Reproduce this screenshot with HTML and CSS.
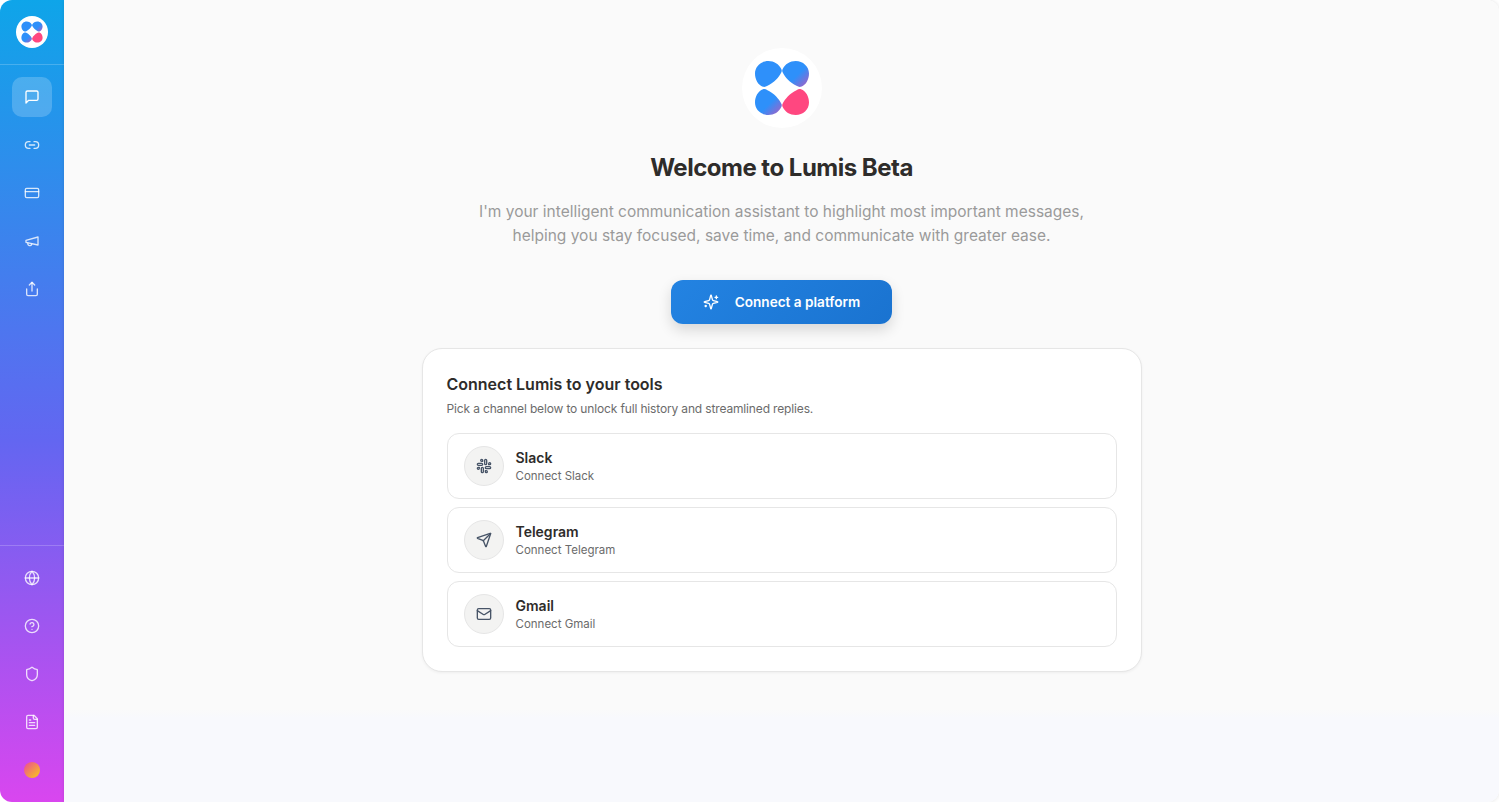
FILE: index.html
```html
<!DOCTYPE html>
<html lang="en">
<head>
    <meta charset="UTF-8">
    <meta name="viewport" content="width=device-width, initial-scale=1.0">
    <title>Lumis Beta</title>
    <link rel="stylesheet" href="styles.css">
</head>
<body>

<svg width="0" height="0" class="defs">
    <defs>
        <linearGradient id="petalA" x1="0" y1="0" x2="1" y2="1">
            <stop offset="0.55" stop-color="#2e90fa"/>
            <stop offset="1" stop-color="#b05cc0"/>
        </linearGradient>
        <symbol id="logo" viewBox="0 0 56 56">
            <path fill="#2e90fa" d="M14.300 1C7 1 1 6.500 1 13.500C1 19.500 4 25 9 26.800C10.500 27.200 12 26.800 13.500 25.800C20 22.500 25 17.500 27.500 12C28 11 27.800 10 27.300 9C25 4 20 1 14.300 1Z"/>
            <path fill="url(#petalA)" d="M41.700 1C49 1 55 6.500 55 13.500C55 19.500 52 25 47 26.800C45.500 27.200 44 26.800 42.500 25.800C36 22.500 31 17.500 28.500 12C28 11 28.200 10 28.700 9C31 4 36 1 41.700 1Z"/>
            <path fill="url(#petalA)" d="M14.300 55C7 55 1 49.500 1 42.500C1 36.500 4 31 9 29.200C10.500 28.800 12 29.200 13.500 30.200C20 33.500 25 38.500 27.500 44C28 45 27.800 46 27.300 47C25 52 20 55 14.300 55Z"/>
            <path fill="#ff4780" d="M41.700 55C49 55 55 49.500 55 42.500C55 36.500 52 31 47 29.200C45.500 28.800 44 29.200 42.500 30.200C36 33.500 31 38.500 28.500 44C28 45 28.200 46 28.700 47C31 52 36 55 41.700 55Z"/>
        </symbol>
    </defs>
</svg>

<div class="app">
    <!-- Sidebar -->
    <aside class="sidebar">
        <div class="side-top">
            <div class="side-logo"><svg class="logo-small"><use href="#logo"/></svg></div>
        </div>
        <nav class="side-nav">
            <a class="side-btn active"><svg class="ico" viewBox="0 0 24 24"><path d="M21 15a2 2 0 0 1-2 2H7l-4 4V5a2 2 0 0 1 2-2h14a2 2 0 0 1 2 2z"/></svg></a>
            <a class="side-btn"><svg class="ico" viewBox="0 0 24 24"><path d="M9 17H7A5 5 0 0 1 7 7h2"/><path d="M15 7h2a5 5 0 1 1 0 10h-2"/><line x1="8" y1="12" x2="16" y2="12"/></svg></a>
            <a class="side-btn"><svg class="ico" viewBox="0 0 24 24"><rect x="2" y="5" width="20" height="14" rx="2"/><line x1="2" y1="10" x2="22" y2="10"/></svg></a>
            <a class="side-btn"><svg class="ico" viewBox="0 0 24 24"><path d="M3 11l18-5v12L3 14z"/><path d="M11.600 16.800a3 3 0 1 1-5.800-1.600"/></svg></a>
            <a class="side-btn"><svg class="ico" viewBox="0 0 24 24"><path d="M4 12v8a2 2 0 0 0 2 2h12a2 2 0 0 0 2-2v-8"/><polyline points="16 6 12 2 8 6"/><line x1="12" y1="2" x2="12" y2="15"/></svg></a>
        </nav>
        <div class="side-bottom">
            <a class="side-btn"><svg class="ico" viewBox="0 0 24 24"><circle cx="12" cy="12" r="10"/><path d="M12 2a14.500 14.500 0 0 0 0 20 14.500 14.500 0 0 0 0-20"/><path d="M2 12h20"/></svg></a>
            <a class="side-btn"><svg class="ico" viewBox="0 0 24 24"><circle cx="12" cy="12" r="10"/><path d="M9.090 9a3 3 0 0 1 5.830 1c0 2-3 3-3 3"/><line x1="12" y1="17" x2="12.010" y2="17"/></svg></a>
            <a class="side-btn"><svg class="ico" viewBox="0 0 24 24"><path d="M20 13c0 5-3.500 7.500-7.660 8.950a1 1 0 0 1-.67-.01C7.500 20.500 4 18 4 13V6a1 1 0 0 1 1-1c2 0 4.500-1.200 6.240-2.720a1.170 1.170 0 0 1 1.520 0C14.510 3.810 17 5 19 5a1 1 0 0 1 1 1z"/></svg></a>
            <a class="side-btn"><svg class="ico" viewBox="0 0 24 24"><path d="M15 2H6a2 2 0 0 0-2 2v16a2 2 0 0 0 2 2h12a2 2 0 0 0 2-2V7z"/><path d="M14 2v4a2 2 0 0 0 2 2h4"/><path d="M10 9H8"/><path d="M16 13H8"/><path d="M16 17H8"/></svg></a>
            <a class="side-btn"><span class="avatar"></span></a>
        </div>
    </aside>

    <!-- Main -->
    <main class="main">
        <div class="hero-logo"><svg class="logo-big"><use href="#logo"/></svg></div>
        <h1>Welcome to Lumis Beta</h1>
        <p class="intro">I'm your intelligent communication assistant to highlight most important messages,<br>helping you stay focused, save time, and communicate with greater ease.</p>
        <button class="connect-btn">
            <svg class="ico spark" viewBox="0 0 24 24"><path d="M9.900 15.500A2 2 0 0 0 8.500 14.100L2.400 12.500a.5.5 0 0 1 0-1l6.100-1.600A2 2 0 0 0 9.900 8.500l1.600-6.100a.5.5 0 0 1 1 0l1.600 6.100a2 2 0 0 0 1.400 1.400l6.100 1.600a.5.5 0 0 1 0 1l-6.100 1.600a2 2 0 0 0-1.400 1.400l-1.600 6.100a.5.5 0 0 1-1 0z"/><path d="M20 3v4"/><path d="M22 5h-4"/><path d="M4 17v2"/><path d="M5 18H3"/></svg>
            Connect a platform
        </button>

        <section class="tools">
            <h2>Connect Lumis to your tools</h2>
            <p class="tools-sub">Pick a channel below to unlock full history and streamlined replies.</p>

            <div class="tool">
                <span class="tool-icon"><svg class="ico" viewBox="0 0 24 24"><rect x="13" y="2" width="3" height="8" rx="1.500"/><path d="M19 8.500V10h1.500A1.500 1.500 0 1 0 19 8.500"/><rect x="8" y="14" width="3" height="8" rx="1.500"/><path d="M5 15.500V14H3.500A1.500 1.500 0 1 0 5 15.500"/><rect x="14" y="13" width="8" height="3" rx="1.500"/><path d="M15.500 19H14v1.500a1.500 1.500 0 1 0 1.500-1.500"/><rect x="2" y="8" width="8" height="3" rx="1.500"/><path d="M8.500 5H10V3.500A1.500 1.500 0 1 0 8.500 5"/></svg></span>
                <div>
                    <div class="tool-name">Slack</div>
                    <div class="tool-desc">Connect Slack</div>
                </div>
            </div>
            <div class="tool">
                <span class="tool-icon"><svg class="ico" viewBox="0 0 24 24"><path d="M14.500 21.700a.5.5 0 0 0 .94-.02l6.500-19a.5.5 0 0 0-.64-.63l-19 6.500a.5.5 0 0 0-.02.93l7.930 3.180a2 2 0 0 1 1.110 1.110z"/><path d="M21.850 2.150 10.900 13.100"/></svg></span>
                <div>
                    <div class="tool-name">Telegram</div>
                    <div class="tool-desc">Connect Telegram</div>
                </div>
            </div>
            <div class="tool">
                <span class="tool-icon"><svg class="ico" viewBox="0 0 24 24"><rect x="2" y="4" width="20" height="16" rx="2"/><path d="m22 7-8.970 5.700a1.940 1.940 0 0 1-2.060 0L2 7"/></svg></span>
                <div>
                    <div class="tool-name">Gmail</div>
                    <div class="tool-desc">Connect Gmail</div>
                </div>
            </div>
        </section>
    </main>
</div>

</body>
</html>
```

FILE: styles.css
```css
* {
    box-sizing: border-box;
}

html, body {
    height: 100%;
}

body {
    margin: 0;
    background: #fff;
    color: #2e2c2a;
    font-family: Inter, "Noto Sans", sans-serif;
    overflow: hidden;
}

/* kept rendered, display:none would break the gradient refs */
.defs {
    display: block;
    width: 0;
    height: 0;
}

.app {
    display: flex;
    height: 100vh;
}

.ico {
    width: 16px;
    height: 16px;
    fill: none;
    stroke: currentColor;
    stroke-width: 2;
    stroke-linecap: round;
    stroke-linejoin: round;
}

/* sidebar */
.sidebar {
    width: 64px;
    flex-shrink: 0;
    display: flex;
    flex-direction: column;
    background: linear-gradient(180deg, #0ea5e9 0%, #6366f1 55%, #d946ef 100%);
    border-radius: 12px 0 0 12px;
    color: rgba(255, 255, 255, 0.8);
}

.side-top {
    height: 65px;
    display: flex;
    justify-content: center;
    align-items: center;
    border-bottom: 1px solid rgba(255, 255, 255, 0.2);
}

.side-logo {
    width: 32px;
    height: 32px;
    border-radius: 50%;
    background: #fff;
    display: flex;
    justify-content: center;
    align-items: center;
}

.logo-small {
    width: 22px;
    height: 22px;
}

.side-nav {
    flex: 1;
    display: flex;
    flex-direction: column;
    align-items: center;
    gap: 8px;
    padding-top: 12px;
}

.side-bottom {
    display: flex;
    flex-direction: column;
    align-items: center;
    gap: 8px;
    padding: 12px 0;
    border-top: 1px solid rgba(255, 255, 255, 0.2);
}

.side-btn {
    width: 40px;
    height: 40px;
    border-radius: 10px;
    display: flex;
    justify-content: center;
    align-items: center;
}

.side-btn.active {
    background: rgba(255, 255, 255, 0.2);
    color: #fff;
}

.avatar {
    width: 16px;
    height: 16px;
    border-radius: 50%;
    background: linear-gradient(135deg, #ec4899, #facc15);
}

/* main */
.main {
    flex: 1;
    display: flex;
    flex-direction: column;
    align-items: center;
    padding-top: 48px;
    background: linear-gradient(180deg, #fafafa 88.5%, #f8f9fd 89.5%);
    border-radius: 0 12px 12px 0;
    box-shadow: 0 0 4px rgba(0, 0, 0, 0.12);
}

.hero-logo {
    width: 80px;
    height: 80px;
    border-radius: 50%;
    background: #fff;
    display: flex;
    justify-content: center;
    align-items: center;
}

.logo-big {
    width: 56px;
    height: 56px;
}

h1 {
    margin: 24px 0 0;
    font-size: 24px;
    line-height: 32px;
    font-weight: 700;
    letter-spacing: -0.5px;
}

.intro {
    margin: 16px 0 0;
    font-size: 15.5px;
    line-height: 24px;
    color: #9a9a9a;
    text-align: center;
}

.connect-btn {
    margin-top: 32px;
    width: 221px;
    height: 44px;
    display: flex;
    justify-content: center;
    align-items: center;
    gap: 16px;
    border: none;
    border-radius: 12px;
    background: linear-gradient(135deg, #2383e2, #1a73d0);
    color: #fff;
    font-family: inherit;
    font-size: 13.6px;
    font-weight: 600;
    box-shadow: 0 6px 14px rgba(0, 0, 0, 0.14);
}

.tools {
    margin-top: 24px;
    width: 720px;
    padding: 24px;
    background: #fff;
    border: 1px solid #e6e6e6;
    border-radius: 20px;
    box-shadow: 0 1px 3px rgba(0, 0, 0, 0.05);
}

h2 {
    margin: 0;
    font-size: 16px;
    line-height: 22px;
    font-weight: 600;
}

.tools-sub {
    margin: 6px 0 16px;
    font-size: 12px;
    line-height: 16px;
    letter-spacing: -0.15px;
    color: #6b6b6b;
}

.tool {
    height: 66px;
    margin-top: 8px;
    padding: 0 16px;
    display: flex;
    align-items: center;
    gap: 12px;
    border: 1px solid #e6e6e6;
    border-radius: 12px;
}

.tool-icon {
    width: 40px;
    height: 40px;
    border-radius: 50%;
    background: #f3f3f2;
    border: 1px solid #e6e6e6;
    display: flex;
    justify-content: center;
    align-items: center;
    color: #475467;
}

.tool-name {
    font-size: 14px;
    line-height: 18px;
    margin-bottom: 1px;
    font-weight: 600;
}

.tool-desc {
    font-size: 11.5px;
    line-height: 16px;
    color: #6b6b6b;
}
```
